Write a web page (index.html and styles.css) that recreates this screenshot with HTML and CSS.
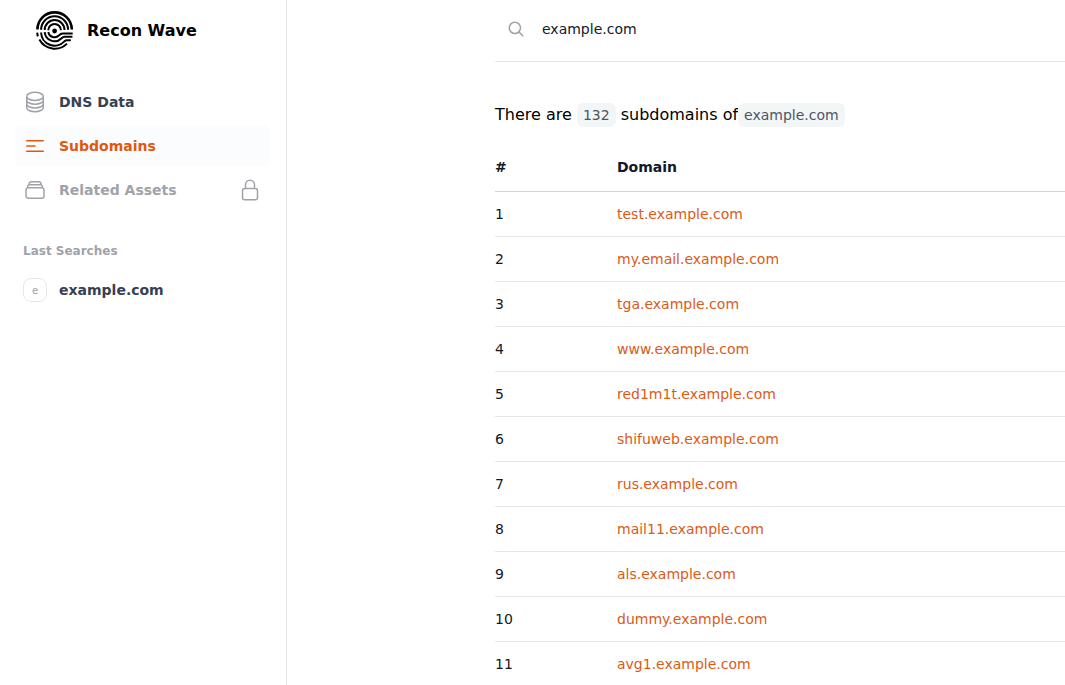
FILE: index.html
```html
<!DOCTYPE html>
<html lang="en">
<head>
    <meta charset="UTF-8">
    <meta name="viewport" content="width=device-width, initial-scale=1.0">
    <title>Recon Wave</title>
    <link rel="stylesheet" href="styles.css">
</head>
<body>

    <aside class="sidebar">
        <a class="brand" href="#">
            <svg class="brand-logo" viewBox="0 0 40 40" fill="none" stroke="#000" stroke-width="2">
                <circle cx="19.6" cy="20" r="2.4" fill="#000" stroke="none"/>
                <!-- upper half of the rings -->
                <path d="M2.4 18.6a17.2 17.2 0 0 1 34.4 0" stroke-width="2.6"/>
                <path d="M6.1 18.8a13.5 13.5 0 0 1 27 0"/>
                <path d="M9.7 19a9.9 9.9 0 0 1 19.8 0"/>
                <path d="M13.3 19.2a6.3 6.3 0 0 1 12.6 0"/>
                <!-- lower half, running out into bars on the right -->
                <path d="M13.3 21a6.3 6.3 0 0 0 10.8 3.3q1.6-1.9 3.6-1.9h10"/>
                <path d="M9.7 21.2a9.9 9.9 0 0 0 16.9 6.1q1.4-1.5 3.2-1.5h7.6"/>
                <path d="M6.1 21.4a13.5 13.5 0 0 0 23.3 9q1-1.1 2.6-1.1h3.8"/>
                <path d="M2.2 21.6q.1 2 .7 3.8M4.4 28.6a17.4 17.4 0 0 0 27.6 4"/>
            </svg>
            <span>Recon Wave</span>
        </a>

        <nav class="menu">
            <a class="menu-item" href="#">
                <svg class="icon" viewBox="0 0 24 24">
                    <path d="M20.25 6.375c0 2.278-3.694 4.125-8.25 4.125S3.75 8.653 3.75 6.375m16.5 0c0-2.278-3.694-4.125-8.25-4.125S3.75 4.097 3.75 6.375m16.5 0v11.25c0 2.278-3.694 4.125-8.25 4.125s-8.25-1.847-8.25-4.125V6.375m16.5 0v3.75m-16.5-3.75v3.75m16.5 0v3.75C20.25 16.153 16.556 18 12 18s-8.25-1.847-8.25-4.125v-3.75m16.5 0c0 2.278-3.694 4.125-8.25 4.125s-8.25-1.847-8.25-4.125"/>
                </svg>
                <span>DNS Data</span>
            </a>
            <a class="menu-item active" href="#">
                <svg class="icon" viewBox="0 0 24 24">
                    <path d="M3.75 6.75h16.5M3.75 12H12m-8.25 5.25h16.5"/>
                </svg>
                <span>Subdomains</span>
            </a>
            <a class="menu-item locked" href="#">
                <svg class="icon" viewBox="0 0 24 24">
                    <path d="M6 6.878V6a2.25 2.25 0 0 1 2.25-2.25h7.5A2.25 2.25 0 0 1 18 6v.878m-12 0c.235-.083.487-.128.75-.128h10.5c.263 0 .515.045.75.128m-12 0A2.25 2.25 0 0 0 4.5 9v.878m13.5-3A2.25 2.25 0 0 1 19.5 9v.878m0 0a2.246 2.246 0 0 0-.75-.128H5.25c-.263 0-.515.045-.75.128m15 0A2.25 2.25 0 0 1 21 12v6a2.25 2.25 0 0 1-2.25 2.25H5.25A2.25 2.25 0 0 1 3 18v-6c0-.98.626-1.813 1.5-2.122"/>
                </svg>
                <span>Related Assets</span>
                <svg class="icon lock" viewBox="0 0 24 24">
                    <path d="M16.5 10.5V6.75a4.5 4.5 0 1 0-9 0v3.75m-.75 11.25h10.5a2.25 2.25 0 0 0 2.25-2.25v-6.75a2.25 2.25 0 0 0-2.25-2.25H6.75a2.25 2.25 0 0 0-2.25 2.25v6.75a2.25 2.25 0 0 0 2.25 2.25Z"/>
                </svg>
            </a>
        </nav>

        <h2 class="menu-title">Last Searches</h2>
        <nav class="menu">
            <a class="menu-item" href="#">
                <span class="initial">e</span>
                <span>example.com</span>
            </a>
        </nav>
    </aside>

    <main class="content">
        <form class="search" onsubmit="event.preventDefault();">
            <label for="domain">
                <svg class="search-icon" viewBox="0 0 24 24" role="img" aria-label="Search">
                    <path d="m21 21-5.197-5.197m0 0A7.5 7.5 0 1 0 5.196 5.196a7.5 7.5 0 0 0 10.607 10.607Z"/>
                </svg>
            </label>
            <input type="text" id="domain" value="example.com">
        </form>

        <p class="summary">There are <span class="tag">132</span> subdomains of<span class="tag">example.com</span></p>

        <table class="domains">
            <thead>
                <tr><th class="number">#</th><th>Domain</th></tr>
            </thead>
            <tbody>
                <tr><td>1</td><td><a href="#">test.example.com</a></td></tr>
                <tr><td>2</td><td><a href="#">my.email.example.com</a></td></tr>
                <tr><td>3</td><td><a href="#">tga.example.com</a></td></tr>
                <tr><td>4</td><td><a href="#">www.example.com</a></td></tr>
                <tr><td>5</td><td><a href="#">red1m1t.example.com</a></td></tr>
                <tr><td>6</td><td><a href="#">shifuweb.example.com</a></td></tr>
                <tr><td>7</td><td><a href="#">rus.example.com</a></td></tr>
                <tr><td>8</td><td><a href="#">mail11.example.com</a></td></tr>
                <tr><td>9</td><td><a href="#">als.example.com</a></td></tr>
                <tr><td>10</td><td><a href="#">dummy.example.com</a></td></tr>
                <tr><td>11</td><td><a href="#">avg1.example.com</a></td></tr>
            </tbody>
        </table>
    </main>

</body>
</html>
```

FILE: styles.css
```css
* {
    box-sizing: border-box;
}

body {
    display: flex;
    min-height: 100vh;
    margin: 0;
    font-family: "DejaVu Sans", sans-serif;
    font-size: 14px;
    line-height: 20px;
    color: #111827;
    background-color: #fff;
}

a {
    text-decoration: none;
}

/* Sidebar */
.sidebar {
    flex: 0 0 287px;
    padding: 0 16px 0 15px;
    border-right: 1px solid #e5e7eb;
}

.brand {
    display: flex;
    align-items: center;
    gap: 12px;
    height: 61px;
    margin-bottom: 21px;
    padding-left: 20px;
    font-size: 16px;
    font-weight: bold;
    color: #000;
}

.brand-logo {
    width: 40px;
    height: 40px;
}

.menu {
    display: flex;
    flex-direction: column;
    gap: 4px;
}

.menu-item {
    display: flex;
    align-items: center;
    gap: 12px;
    height: 40px;
    padding: 0 8px;
    border-radius: 6px;
    font-weight: bold;
    color: #374151;
}

.menu-item.active {
    background-color: #fafcfd;
    color: #e2570f;
}

.menu-item.locked {
    color: #9fa3a9;
}

.icon {
    flex: none;
    width: 24px;
    height: 24px;
    fill: none;
    stroke: #9fa3a9;
    stroke-width: 1.5;
    stroke-linecap: round;
    stroke-linejoin: round;
}

.active .icon {
    stroke: #e2570f;
}

.lock {
    margin-left: auto;
}

.menu-title {
    margin: 31px 8px 9px;
    font-size: 12px;
    line-height: 20px;
    color: #9fa3a9;
}

.initial {
    width: 24px;
    height: 24px;
    border: 1px solid #e5e7eb;
    border-radius: 8px;
    font-size: 10px;
    font-weight: normal;
    line-height: 24px;
    text-align: center;
    color: #9fa3a9;
}

/* Main column */
.content {
    flex: 1;
    min-width: 0;
    padding-left: 208px;
}

.search {
    display: flex;
    align-items: center;
    gap: 17px;
    height: 62px;
    padding: 0 0 4px 12px;
    border-bottom: 1px solid #e5e7eb;
}

.search-icon {
    display: block;
    width: 18px;
    height: 18px;
    fill: none;
    stroke: #9fa3a9;
    stroke-width: 2;
    stroke-linecap: round;
}

.search input {
    flex: 1;
    min-width: 0;
    padding: 0;
    border: none;
    outline: none;
    font: inherit;
    color: inherit;
}

.summary {
    margin: 41px 0 16px;
    font-size: 16px;
    line-height: 24px;
    color: #000;
}

.tag {
    display: inline-block;
    padding: 0 6px;
    border-radius: 6px;
    font-size: 14px;
    line-height: 24px;
    color: #4b5563;
    background-color: #f3f6f7;
}

.domains {
    width: 100%;
    border-collapse: separate;
    border-spacing: 0;
    text-align: left;
}

.domains th {
    padding: 14px 0;
    border-bottom: 1px solid #d1d5db;
}

.domains .number {
    width: 122px;
}

.domains td {
    padding: 12px 0;
    border-bottom: 1px solid #e5e7eb;
}

.domains a {
    color: #dc5a16;
}
```
